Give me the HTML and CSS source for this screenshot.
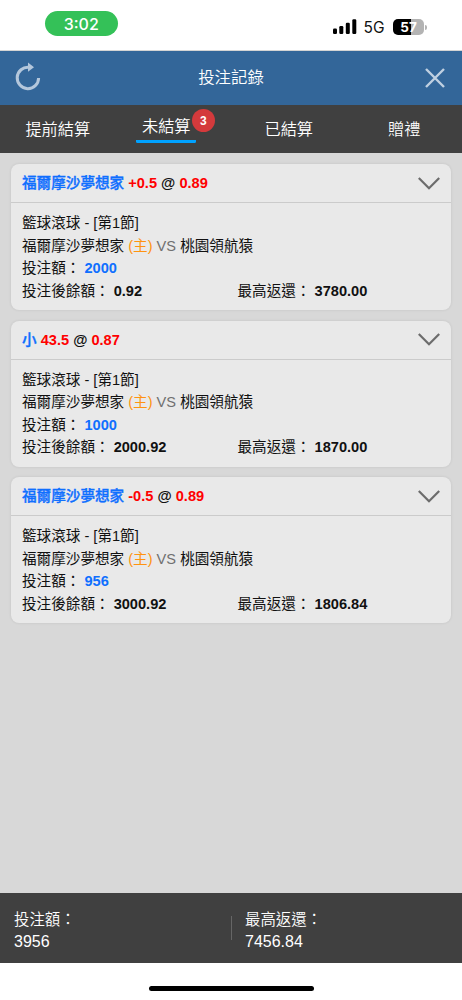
FILE: index.html
```html
<!DOCTYPE html>
<html lang="zh-Hant">
<head>
<meta charset="utf-8">
<meta name="viewport" content="width=device-width, initial-scale=1">
<title>投注記錄</title>
<link rel="stylesheet" href="styles.css">
</head>
<body>
<div class="screen">
  <div class="status">
    <div class="clock">3:02</div>
    <div class="indicators">
      <svg class="signal" width="24" height="16" viewBox="0 0 24 16"><rect x="0" y="9.5" width="4" height="5.5" rx="1.2"/><rect x="6.3" y="7" width="4" height="8" rx="1.2"/><rect x="12.8" y="3.8" width="4" height="11.2" rx="1.2"/><rect x="19.3" y="0.3" width="4" height="14.7" rx="1.2"/></svg>
      <span class="network">5G</span>
      <div class="battery"><span class="level">57</span></div>
      <span class="battery-tip"></span>
    </div>
  </div>
  <header class="titlebar">
    <svg class="icon" width="26" height="30" viewBox="0 0 26 30"><path d="M14 4.3A10.7 10.7 0 1 0 23.6 15" fill="none" stroke="#b4c7dc" stroke-width="3"/><path d="M13 -0.4L19 4.2L13 8.8Z" fill="#b4c7dc"/></svg>
    <h1 class="title">投注記錄</h1>
    <svg class="icon" width="20" height="20" viewBox="0 0 20 20"><path d="M1 1L19 19M19 1L1 19" stroke="#c0d0e1" stroke-width="2.4"/></svg>
  </header>
  <nav class="tabs">
    <div class="tab">提前結算</div>
    <div class="tab tab-active"><span class="tab-label">未結算<span class="badge">3</span></span></div>
    <div class="tab">已結算</div>
    <div class="tab">贈禮</div>
  </nav>
  <main class="list">
    <section class="card">
      <div class="card-head"><div class="pick"><span class="blue">福爾摩沙夢想家</span> <span class="red">+0.5</span> @ <span class="red">0.89</span></div><svg width="22" height="13" viewBox="0 0 22 13"><path d="M0.8 1L11 11.2L21.2 1" fill="none" stroke="#6c6c6c" stroke-width="2.2"/></svg></div>
      <div class="card-body">
        <div>籃球滾球 - [第1節]</div>
        <div>福爾摩沙夢想家 <span class="orange">(主)</span> <span class="gray">VS</span> 桃園領航猿</div>
        <div>投注額： <b class="blue">2000</b></div>
        <div class="amounts"><div>投注後餘額： <b>0.92</b></div><div>最高返還： <b>3780.00</b></div></div>
      </div>
    </section>
    <section class="card">
      <div class="card-head"><div class="pick"><span class="blue">小</span> <span class="red">43.5</span> @ <span class="red">0.87</span></div><svg width="22" height="13" viewBox="0 0 22 13"><path d="M0.8 1L11 11.2L21.2 1" fill="none" stroke="#6c6c6c" stroke-width="2.2"/></svg></div>
      <div class="card-body">
        <div>籃球滾球 - [第1節]</div>
        <div>福爾摩沙夢想家 <span class="orange">(主)</span> <span class="gray">VS</span> 桃園領航猿</div>
        <div>投注額： <b class="blue">1000</b></div>
        <div class="amounts"><div>投注後餘額： <b>2000.92</b></div><div>最高返還： <b>1870.00</b></div></div>
      </div>
    </section>
    <section class="card">
      <div class="card-head"><div class="pick"><span class="blue">福爾摩沙夢想家</span> <span class="red">-0.5</span> @ <span class="red">0.89</span></div><svg width="22" height="13" viewBox="0 0 22 13"><path d="M0.8 1L11 11.2L21.2 1" fill="none" stroke="#6c6c6c" stroke-width="2.2"/></svg></div>
      <div class="card-body">
        <div>籃球滾球 - [第1節]</div>
        <div>福爾摩沙夢想家 <span class="orange">(主)</span> <span class="gray">VS</span> 桃園領航猿</div>
        <div>投注額： <b class="blue">956</b></div>
        <div class="amounts"><div>投注後餘額： <b>3000.92</b></div><div>最高返還： <b>1806.84</b></div></div>
      </div>
    </section>
  </main>
  <footer class="summary">
    <div class="total"><div class="total-label">投注額：</div><div class="total-value">3956</div></div>
    <div class="total-rule"></div>
    <div class="total"><div class="total-label">最高返還：</div><div class="total-value">7456.84</div></div>
  </footer>
  <div class="home"><div class="home-bar"></div></div>
</div>
</body>
</html>
```

FILE: styles.css
```css
* { box-sizing: border-box; }
body {
  margin: 0;
  background: #fff;
  font-family: "Liberation Sans", "Noto Sans CJK TC", sans-serif;
  color: #111;
}
.screen { height: 1000px; display: flex; flex-direction: column; overflow: hidden; }

.status {
  height: 51px;
  flex: none;
  display: flex;
  justify-content: space-between;
  padding: 11px 35px 0 44.5px;
  border-bottom: 1px solid #d4d4d4;
}
.clock {
  width: 73.5px;
  height: 25px;
  border-radius: 13px;
  background: #34c158;
  color: #fff;
  font: 500 16px/26px Inter, sans-serif;
  text-align: center;
}
.indicators { display: flex; align-items: center; height: 32px; }
.signal { margin-right: 7px; }
.network { font: 400 15.5px/18px Inter, sans-serif; width: 29.5px; color: #111; padding-top: 2px; }
.battery {
  width: 31px;
  height: 16px;
  border-radius: 5px;
  background: linear-gradient(90deg, #000 57%, #b3b3b3 57%);
  color: #fff;
  font: 700 13.5px/16px Inter, sans-serif;
  text-align: center;
}
.battery-tip { width: 2px; height: 5px; margin-left: 1px; border-radius: 0 2px 2px 0; background: #b3b3b3; }

.titlebar {
  height: 54px;
  flex: none;
  display: flex;
  align-items: center;
  justify-content: space-between;
  padding: 0 17px 0 15px;
  background: #336699;
}
.icon { overflow: visible; }
.title { margin: 0; padding: 0 4px 2px 0; color: #fff; font-size: 16.4px; font-weight: 350; line-height: 24px; }

.tabs {
  height: 48px;
  flex: none;
  display: grid;
  grid-template-columns: repeat(4, 1fr);
  background: #404040;
  color: #fff;
  font-size: 16.2px;
  font-weight: 350;
}
.tab { display: flex; justify-content: center; padding-top: 12px; line-height: 24px; }
.tab-active { padding: 9px 14px 0 0; }
.tab-label { position: relative; height: 29px; padding: 0 5.7px; line-height: 24px; border-bottom: 3px solid #00a2ff; border-radius: 0 0 1.5px 1.5px; }
.badge {
  position: absolute;
  top: -5px;
  right: -18.5px;
  width: 23px;
  height: 23px;
  border-radius: 50%;
  background: #d43a3c;
  font-size: 12px;
  font-weight: 700;
  line-height: 24px;
  text-align: center;
}

.list {
  flex: 1;
  display: flex;
  flex-direction: column;
  gap: 10.5px;
  padding: 11px 11px 0;
  background: #d8d8d8;
}
.card { height: 146px; border-radius: 8px; background: #e9e9e9; box-shadow: 0 0 3px rgba(0, 0, 0, 0.1); font-size: 14.6px; }
.card-head {
  height: 39px;
  display: flex;
  align-items: center;
  justify-content: space-between;
  padding: 0 11px;
  border-bottom: 1px solid #cbcbcb;
}
.pick { font-weight: 700; line-height: 22px; }
.pick .blue { font-weight: 500; -webkit-text-stroke: 0.35px #0f6fff; }
.card-body { padding: 9px 11px 0; line-height: 22.6px; }
.amounts { display: grid; grid-template-columns: 215.5px 1fr; }
.blue { color: #0f6fff; }
.red { color: #f00; }
.orange { color: #ff9310; }
.gray { color: #707070; }

.summary {
  height: 70px;
  flex: none;
  display: grid;
  grid-template-columns: 231px 1px 1fr;
  align-items: center;
  background: #404040;
  color: #fff;
  font-size: 16px;
}
.total { padding: 6px 0 0 14px; line-height: 22.5px; }
.total + .total-rule + .total { padding-left: 13px; }
.total-label { font-size: 15.4px; font-weight: 350; }
.total-rule { width: 1px; height: 24px; background: #666; }

.home { height: 37px; flex: none; display: flex; justify-content: center; padding-top: 23px; background: #fff; }
.home-bar { width: 165px; height: 5px; border-radius: 3px; background: #000; }
```
